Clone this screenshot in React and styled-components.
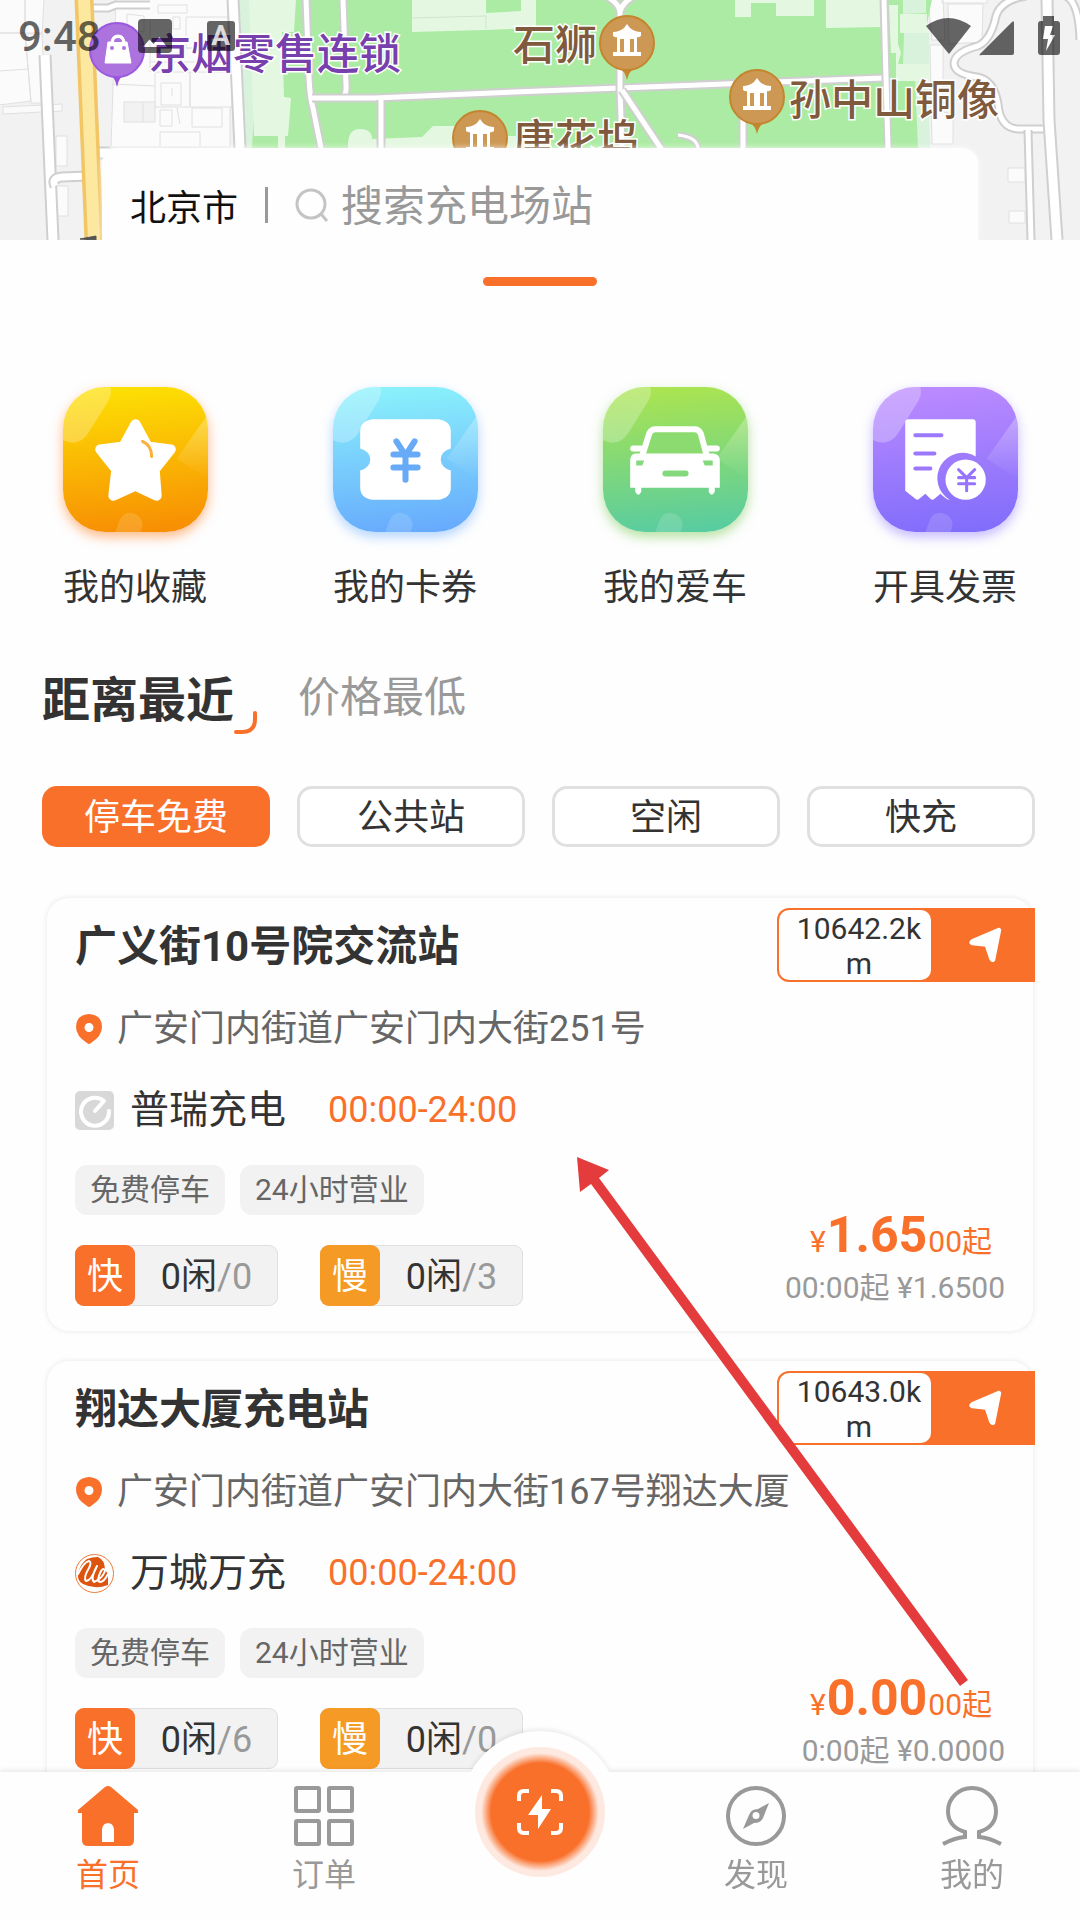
import React, { useState } from "react";
import styled, { createGlobalStyle } from "styled-components";

const services = [
    { id: "fav", label: "我的收藏", from: "#fde304", to: "#f78b03", glow: "rgba(255, 120, 20, 0.5)", Icon: StarIcon },
    { id: "coupon", label: "我的卡券", from: "#8bf4fb", to: "#66a8fd", glow: "rgba(90, 165, 255, 0.45)", Icon: CouponIcon },
    { id: "car", label: "我的爱车", from: "#aee54d", to: "#55cba4", glow: "rgba(110, 200, 70, 0.5)", Icon: CarIcon },
    { id: "invoice", label: "开具发票", from: "#bd8bff", to: "#7f6cfb", glow: "rgba(130, 105, 255, 0.45)", Icon: InvoiceIcon },
];

const filters = ["停车免费", "公共站", "空闲", "快充"];

const stations = [
    {
        name: "广义街10号院交流站",
        distance: "10642.2km",
        address: "广安门内街道广安门内大街251号",
        provider: "普瑞充电",
        Logo: PuruiLogo,
        hours: "00:00-24:00",
        tags: ["免费停车", "24小时营业"],
        fast: "0",
        slow: "3",
        price: "1.65",
        period: "00:00起 ¥1.6500",
    },
    {
        name: "翔达大厦充电站",
        distance: "10643.0km",
        address: "广安门内街道广安门内大街167号翔达大厦",
        provider: "万城万充",
        Logo: WanchengLogo,
        hours: "00:00-24:00",
        tags: ["免费停车", "24小时营业"],
        fast: "6",
        slow: "0",
        price: "0.00",
        period: "0:00起 ¥0.0000",
    },
];

export default function App() {
    const [sort, setSort] = useState("near");
    const [filter, setFilter] = useState(filters[0]);

    return (
        <Page>
            <GlobalStyle />
            <Content>
                <Header>
                    <CityMap />
                    <StatusBar />
                    <SearchBar>
                        <CityButton type="button">北京市</CityButton>
                        <Divider />
                        <SearchLabel>
                            <SearchIcon />
                            <SearchInput type="search" aria-label="搜索充电场站" placeholder="搜索充电场站" />
                        </SearchLabel>
                    </SearchBar>
                </Header>
                <Handle />
                <Services>
                    {services.map(({ id, label, from, to, glow, Icon }) => (
                        <ServiceLink href="#" key={id}>
                            <Tile $from={from} $to={to} $glow={glow}>
                                <Icon />
                            </Tile>
                            {label}
                        </ServiceLink>
                    ))}
                </Services>
                <SortRow>
                    <SortButton type="button" $active={sort === "near"} onClick={() => setSort("near")}>
                        距离最近
                        {sort === "near" && <SortMark />}
                    </SortButton>
                    <SortButton type="button" $active={sort === "cheap"} onClick={() => setSort("cheap")}>
                        价格最低
                        {sort === "cheap" && <SortMark />}
                    </SortButton>
                </SortRow>
                <Filters>
                    {filters.map((f) => (
                        <FilterButton type="button" key={f} $active={f === filter} onClick={() => setFilter(f)}>
                            {f}
                        </FilterButton>
                    ))}
                </Filters>
                <StationList>
                    {stations.map((s) => (
                        <Station key={s.name} station={s} />
                    ))}
                </StationList>
            </Content>
            <TabBar>
                <Bump />
                <Tab href="#" $active>
                    <HomeIcon />
                    首页
                </Tab>
                <Tab href="#">
                    <OrdersIcon />
                    订单
                </Tab>
                <ScanSlot>
                    <ScanButton type="button" aria-label="扫码充电">
                        <ScanIcon />
                    </ScanButton>
                </ScanSlot>
                <Tab href="#">
                    <CompassIcon />
                    发现
                </Tab>
                <Tab href="#">
                    <PersonIcon />
                    我的
                </Tab>
            </TabBar>
            <Pointer viewBox="0 0 1080 1920" aria-hidden="true">
                <path d="M577 1157L609 1170L599 1178L968 1680L960 1686L591 1184L580 1192z" fill="#e43c3c" />
            </Pointer>
        </Page>
    );
}

function Station({ station }) {
    const { Logo } = station;
    return (
        <Card>
            <CardHead>
                <StationName>{station.name}</StationName>
                <NavButton type="button">
                    <Distance>{station.distance}</Distance>
                    <NavIcon viewBox="0 0 34 36">
                        <path d="M31 3L25 33Q23 35 21.500 32L17 18.500L3 17Q0 15.500 3 13.500L30 2z" fill="#fff" stroke="#fff" strokeWidth="2.500" strokeLinejoin="round" />
                    </NavIcon>
                </NavButton>
            </CardHead>
            <Address>
                <PinIcon />
                {station.address}
            </Address>
            <Provider>
                <Logo />
                {station.provider}
                <Hours>{station.hours}</Hours>
            </Provider>
            <CardFoot>
                <div>
                    <Tags>
                        {station.tags.map((t) => (
                            <Tag key={t}>{t}</Tag>
                        ))}
                    </Tags>
                    <Slots>
                        <Slot>
                            <SlotKind $color="#f9702b">快</SlotKind>
                            <SlotCount>
                                0闲<Muted>/{station.fast}</Muted>
                            </SlotCount>
                        </Slot>
                        <Slot>
                            <SlotKind $color="#f59a25">慢</SlotKind>
                            <SlotCount>
                                0闲<Muted>/{station.slow}</Muted>
                            </SlotCount>
                        </Slot>
                    </Slots>
                </div>
                <PriceBox>
                    <Price>
                        ¥<strong>{station.price}</strong>00起
                    </Price>
                    <Muted>{station.period}</Muted>
                </PriceBox>
            </CardFoot>
        </Card>
    );
}

function StatusBar() {
    return (
        <Status>
            <Clock>9:48</Clock>
            <svg width="34" height="34" viewBox="0 0 34 34">
                <path fillRule="evenodd" d="M4 0H30Q34 0 34 4V30Q34 34 30 34H4Q0 34 0 30V4Q0 0 4 0zM5 28H29L21.500 18L15.500 25L11.500 20.500z" fill="#000" opacity="0.6" />
            </svg>
            <InputBadge>A</InputBadge>
            <StatusIcons width="134" height="40" viewBox="0 0 134 40">
                <path d="M0 10Q22-6 45 10L23 38z" />
                <path d="M54 38L86 6Q88 4 88 7V37Q88 39 86 39H56Q52 40 54 38z" />
                <path fillRule="evenodd" d="M117 0H128V5H131Q134 5 134 8V36Q134 39 131 39H115Q112 39 112 36V8Q112 5 115 5H117zM119 10L117 23H122L120 35L129 19H124L127 10z" />
            </StatusIcons>
        </Status>
    );
}

function Road({ d, width = 9 }) {
    return (
        <>
            <path d={d} fill="none" stroke="#cfcfcf" strokeWidth={width} />
            <path d={d} fill="none" stroke="#fff" strokeWidth={width - 4} />
        </>
    );
}

function Landmark({ x, y }) {
    return (
        <g transform={`translate(${x} ${y})`}>
            <path d="M-8 25Q-2 28 0 37Q2 28 8 25z" fill="#c4852f" />
            <circle r="27" fill="#cc9853" stroke="#c4852f" strokeWidth="2" />
            <path fillRule="evenodd" d="M0-19L3-15Q8-11 14-11V-7Q11-5 10-6V9H14V13H-14V9H-10V-6Q-11-5-14-7V-11Q-8-11-3-15zM-7-4V9H-3V-4zM3-4V9H7V-4z" fill="#fff" />
        </g>
    );
}

function CityMap() {
    return (
        <MapSvg viewBox="0 0 1080 240" preserveAspectRatio="xMidYMin slice" aria-hidden="true">
            <rect width="1080" height="240" fill="#f2f2f2" />
            <g fill="#fbfbfb" stroke="#e0e0e0">
                <path d="M-1-1H25V33H-1zM25-1H44L42 34H25zM-1 33H25L31 101L-1 105zM25 33H42L45 103H31z" />
                <path d="M-1 71L29 69" />
                <path d="M56 136H67V166H56zM55 186H68V216H55z" />
                <path d="M116-2H230V147H111z" />
                <path d="M158 5H187V13H158zM127 14L144 16V32L127 28zM173 17H180V29H173zM186 17H228V48H186z" />
                <path d="M155 72H190V107H155zM161 83H181V105H161zM172 88V96M190 72H232V107H190zM192 108H222V127H192zM160 110H172V126H160zM160 132H200V147H160z" />
                <path d="M124 102H155V122H124zM143 103V122M112 84L155 86M177 108L180 124M150 48H229M150 62H229M150 20V72" fill="#f2f2f2" />
                <path d="M928-1H943L945 40H932zM942-1H987V3H942zM948 4H983L982 42L949 44zM930 45H943V112L953 114V144H932z" />
                <path d="M1008 168H1025V182H1008zM1009 211H1025V223H1009z" />
            </g>
            <path d="M238-1H932L920 60L930 148H243z" fill="#acebA3" />
            <path d="M238-1H254L257 60L252 148H243z" fill="#d9f2dc" />
            <path d="M249-1H296L294 32H282L284 97L291 98L288 136H254z" fill="#e4f8e1" />
            <path d="M278 136H285V148H278zM412-1H536V28L485 30L412 32z" fill="#e4f8e1" />
            <path d="M486-1H521V11L486 13z" fill="#acebA3" />
            <path d="M412 18L486 16V29" fill="none" stroke="#cfe5cc" />
            <path d="M348 148Q347 129 360 129Q372 129 372 139L422 137L433 126H455V148zM505 136H516V148H505z" fill="#e4f8e1" />
            <path d="M735-1H814V16H776V3H751V17H735zM826-1H881V27L826 28z" fill="#e4f8e1" />
            <path d="M903-1H926V13L903 14zM904 33H929V64L903 65zM915 80L928 80L930 148H918z" fill="#d9f2dc" />
            <path d="M889 5H898V44L901 53L898 64H929V81H896V53H891zM900 14H927V33H900z" fill="#e4f8e1" />
            <path d="M3 107L62 104V111L3 114z" fill="#fafafa" stroke="#e0e0e0" />
            <Road d="M45 55L53 240" width={13} />
            <Road d="M88 176L62 177Q51 178 55 186" width={11} />
            <Road d="M90 8H108L116 5H150" />
            <Road d="M97 153H110" width={13} />
            <path d="M84-1L94 240" stroke="#f2c565" strokeWidth="19" />
            <path d="M84-1L94 240" stroke="#fde8a0" strokeWidth="12" />
            <Road d="M233-1L240 148" width={13} />
            <Road d="M306-1L309 78Q310 98 313 108L321 148" />
            <Road d="M343-1L346 85Q347 97 340 97" />
            <Road d="M312 98H375L540 91L620 88L884 78" />
            <Road d="M381 100V148" />
            <Road d="M606-4Q619 3 620 12L620 88L622 148M620 12Q622 3 634-4" />
            <Road d="M622 90L662 150" />
            <Road d="M678 135Q697 137 698 148" width={7} />
            <Road d="M743 90V148" />
            <Road d="M884-1L886 78L888 148" />
            <Road d="M1026-4Q1001 0 996 16Q991 40 978 46Q955 52 954 63Q954 74 977 77Q994 80 998 104Q1000 128 1018 129H1050" />
            <Road d="M1028 130L1031 240" />
            <Road d="M1066-4Q1079 3 1080 40" />
            <Road d="M1047-1L1049 120L1057 240" width={13} />
            <path d="M80 239L96 236V240z" fill="#555" stroke="#555" />
            <path d="M109 74Q115 77 117 87Q119 77 125 74z" fill="#9852d8" />
            <circle cx="117" cy="50" r="27" fill="#ac73de" stroke="#9b58df" strokeWidth="2" />
            <path d="M108 42H127L131 63H105zM111 44Q111 35 118 35Q125 35 125 44" fill="#fff" stroke="#fff" />
            <path d="M114 42Q114 38 118 38Q122 38 122 42z" fill="#ac73de" />
            <circle cx="112" cy="48" r="2" fill="#ac73de" />
            <circle cx="124" cy="48" r="2" fill="#ac73de" />
            <MapText x="149" y="69" $color="#7740ac">京烟零售连锁</MapText>
            <MapText x="513" y="60" $color="#805a3d">石狮</MapText>
            <Landmark x="627" y="43" />
            <MapText x="789" y="115" $color="#805a3d">孙中山铜像</MapText>
            <Landmark x="757" y="97" />
            <MapText x="513" y="155" $color="#805a3d">唐花坞</MapText>
            <Landmark x="480" y="138" />
        </MapSvg>
    );
}

function SearchIcon() {
    return (
        <svg width="34" height="36" viewBox="0 0 34 36" fill="none" stroke="#c4c4c4" strokeWidth="3">
            <circle cx="16" cy="17" r="14" />
            <path d="M26 27L32 34" />
        </svg>
    );
}

function SortMark() {
    return (
        <SortMarkSvg viewBox="0 0 23 23">
            <path d="M2 21H8Q21 21 21 8V2" fill="none" stroke="#f9702b" strokeWidth="4" strokeLinecap="round" />
        </SortMarkSvg>
    );
}

// light shapes shared by all four tiles
function TileShine() {
    return (
        <>
            <defs>
                <linearGradient id="shine" x1="0" y1="0" x2="0" y2="1">
                    <stop offset="0" stopColor="#fff" stopOpacity="0.3" />
                    <stop offset="1" stopColor="#fff" stopOpacity="0" />
                </linearGradient>
            </defs>
            <path d="M0 0H47Q49 6 45 14L25 46Q16 60 0 53z" fill="#fff" opacity="0.26" />
            <path d="M144 27L113 71L144 92z" fill="url(#shine)" />
            <path d="M52 144L56 133Q59 125 67 125Q79 127 79 138L77 144z" fill="#fff" opacity="0.14" />
        </>
    );
}

function StarIcon() {
    return (
        <svg viewBox="0 0 144 144">
            <TileShine />
            <path d="M72 37L84 59L107 62L91 82L93 108L72 98L50 108L53 82L37 62L60 59z" fill="#fff" stroke="#fff" strokeWidth="10" strokeLinejoin="round" />
            <path d="M79 54Q88 58 88 69" fill="none" stroke="#fbb03b" strokeWidth="3" strokeLinecap="round" />
        </svg>
    );
}

function CouponIcon() {
    return (
        <svg viewBox="0 0 144 144">
            <TileShine />
            <path d="M39 32H105Q117 34 117 44V61Q107 64 107 72Q107 80 117 83V100Q117 110 105 112H39Q27 110 27 100V83Q37 80 37 72Q37 64 27 61V44Q27 34 39 32z" fill="#fff" />
            <path d="M63 54L72 68L81 54M60 67H84M60 80H84M72 68V92" fill="none" stroke="#67abf8" strokeWidth="6" strokeLinecap="round" />
        </svg>
    );
}

function CarIcon() {
    return (
        <svg viewBox="0 0 144 144">
            <TileShine />
            <path d="M39 68L46 46Q48 42 52 42H91Q95 42 97 46L103 68" fill="#8cdb70" stroke="#fff" strokeWidth="6" />
            <path d="M30 61H38M104 61H113" stroke="#fff" strokeWidth="6" strokeLinecap="round" />
            <path d="M32 66H110Q116 67 116 73V100H111V104Q108 110 105 104V100H38V104Q35 110 32 104V100H27V73Q27 67 32 66z" fill="#fff" />
            <path d="M33 73H41L39 78H33zM99 73H109V78H101z" fill="#84d97c" />
            <rect x="59" y="83" width="26" height="6" rx="3" fill="#84d97c" />
        </svg>
    );
}

function InvoiceIcon() {
    return (
        <svg viewBox="0 0 144 144">
            <TileShine />
            <path d="M35 32H99Q102 32 102 35V69A25 25 0 0 0 76 112Q73 112 67 106L61 111Q59 113 57 111L52 106L46 111Q44 113 42 111L32 103V35Q32 32 35 32z" fill="#fff" />
            <circle cx="92" cy="92" r="20" fill="#fff" />
            <path d="M42 48H68M42 66H61M42 81H57" stroke="#9c79fc" strokeWidth="4" strokeLinecap="round" />
            <path d="M85 82L93 90L101 82M85 90H101M85 96H101M93 90V103" fill="none" stroke="#9674fc" strokeWidth="3" strokeLinecap="round" />
        </svg>
    );
}

function PinIcon() {
    return (
        <svg width="28" height="30" viewBox="0 0 28 30">
            <path fillRule="evenodd" d="M14 0Q27 1 27 13Q27 22 16 29Q14 31 12 29Q1 22 1 13Q1 1 14 0zM14 9A4.500 4.500 0 1 0 14 18A4.500 4.500 0 1 0 14 9z" fill="#f9702b" />
        </svg>
    );
}

function PuruiLogo() {
    return (
        <svg width="39" height="39" viewBox="0 0 39 39">
            <rect width="39" height="39" rx="5" fill="#d8d8d8" />
            <path d="M20 20L29 10A14 14 0 1 0 34 20" fill="none" stroke="#fff" strokeWidth="4" strokeLinecap="round" strokeLinejoin="round" />
        </svg>
    );
}

function WanchengLogo() {
    return (
        <svg width="39" height="39" viewBox="0 0 39 39">
            <circle cx="19.500" cy="19.500" r="19" fill="#fff" stroke="#ee7a3a" />
            <path d="M12 5Q17 3 23 3Q30 6 30 16L33 20V31Q20 36 8 30Q2 27 3 19Q6 9 12 5z" fill="#dd5410" />
            <path d="M3 20Q9 8 14 7Q17 8 14 14Q8 24 11 27Q16 27 22 12Q15 25 19 28Q27 25 30 17Q29 13 26 17Q21 27 25 28Q29 28 33 20" fill="none" stroke="#fff" strokeWidth="2" strokeLinecap="round" strokeLinejoin="round" />
        </svg>
    );
}

function HomeIcon() {
    return (
        <svg width="60" height="60" viewBox="0 0 60 60">
            <path fillRule="evenodd" d="M27 1Q30-1 33 1L60 24V27H56V54Q56 60 50 60H10Q4 60 4 54V27H0V24zM24 56H36V43Q35 37 30 37Q25 37 24 43z" fill="currentColor" />
        </svg>
    );
}

function OrdersIcon() {
    return (
        <svg width="60" height="60" viewBox="0 0 60 60" fill="none" stroke="currentColor" strokeWidth="4">
            <rect x="2" y="2" width="23" height="23" rx="1" />
            <rect x="35" y="2" width="23" height="23" rx="1" />
            <rect x="2" y="35" width="23" height="23" rx="1" />
            <rect x="35" y="35" width="23" height="23" rx="1" />
        </svg>
    );
}

function CompassIcon() {
    return (
        <svg width="60" height="60" viewBox="0 0 60 60">
            <circle cx="30" cy="30" r="28" fill="none" stroke="currentColor" strokeWidth="4" />
            <path fillRule="evenodd" d="M43 17L37 32Q35 37 28 37L17 43L23 29Q25 23 32 23zM30 26A3.500 3.500 0 1 0 30 33A3.500 3.500 0 1 0 30 26z" fill="currentColor" />
        </svg>
    );
}

function PersonIcon() {
    return (
        <svg width="60" height="60" viewBox="0 0 60 60" fill="none" stroke="currentColor" strokeWidth="4">
            <path d="M1 58Q12 52 23 51V46Q6 41 6 25A24 23 0 0 1 54 25Q54 41 37 46V51Q48 52 59 58" />
        </svg>
    );
}

function ScanIcon() {
    return (
        <svg width="48" height="48" viewBox="0 0 48 48">
            <path d="M13 3H8Q3 3 3 8V13M35 3H40Q45 3 45 8V13M13 45H8Q3 45 3 40V35M35 45H40Q45 45 45 40V35" fill="none" stroke="#fff" strokeWidth="4" />
            <path d="M26 7L12 27H22V41L35 21H26z" fill="#fff" />
        </svg>
    );
}

const GlobalStyle = createGlobalStyle`
    body {
        margin: 0;
        background: #fefefe;
        color: #333;
        font-family: Roboto, "Noto Sans CJK SC", sans-serif;
    }

    * {
        box-sizing: border-box;
    }

    button,
    input {
        font: inherit;
        color: inherit;
        padding: 0;
        border: none;
        background: none;
    }

    svg {
        flex-shrink: 0;
    }
`;

const Page = styled.div`
    position: relative;
    display: flex;
    flex-direction: column;
    height: 100vh;
    overflow: hidden;
`;

const Content = styled.main`
    flex: 1;
    min-height: 0;
    overflow-y: auto;
    scrollbar-width: none;
`;

const Header = styled.header`
    position: relative;
    height: 240px;
    display: flex;
    flex-direction: column;
    justify-content: space-between;
    overflow: hidden;
`;

const MapSvg = styled.svg`
    position: absolute;
    inset: 0;
    width: 100%;
    height: 100%;
`;

const MapText = styled.text`
    font-size: 42px;
    font-weight: 500;
    fill: ${(p) => p.$color};
    stroke: #fff;
    stroke-width: 3px;
    paint-order: stroke;
`;

const Status = styled.div`
    position: relative;
    display: flex;
    align-items: center;
    height: 72px;
    padding: 0 20px 0 18px;
`;

const Clock = styled.span`
    font-size: 42px;
    font-weight: 500;
    line-height: 48px;
    padding-top: 2px;
    color: rgba(0, 0, 0, 0.6);
    margin-right: 37px;
`;

const InputBadge = styled.span`
    width: 28px;
    height: 30px;
    margin-left: 35px;
    border-radius: 3px;
    background: rgba(0, 0, 0, 0.6);
    color: rgba(255, 255, 255, 0.8);
    font-size: 28px;
    font-weight: 700;
    line-height: 30px;
    text-align: center;
`;

const StatusIcons = styled.svg`
    margin-left: auto;
    fill: rgba(0, 0, 0, 0.6);
`;

const SearchBar = styled.div`
    position: relative;
    display: flex;
    align-items: center;
    height: 92px;
    margin: 0 102px;
    padding: 22px 28px 0;
    border-radius: 16px 16px 0 0;
    background: #fefefe;
    box-shadow: 0 0 6px rgba(255, 255, 255, 0.8);
`;

const CityButton = styled.button`
    color: #111;
    font-size: 36px;
    white-space: nowrap;
`;

const Divider = styled.span`
    width: 3px;
    height: 36px;
    margin: 0 27px;
    background: #999;
`;

const SearchLabel = styled.label`
    flex: 1;
    display: flex;
    align-items: center;
    gap: 12px;
`;

const SearchInput = styled.input`
    flex: 1;
    min-width: 0;
    padding-top: 3px;
    font-size: 42px;
    outline: none;

    &::placeholder {
        color: #999;
        opacity: 1;
    }
`;

const Handle = styled.div`
    width: 114px;
    height: 9px;
    margin: 37px auto 101px;
    border-radius: 5px;
    background: #f9702b;
`;

const Services = styled.nav`
    display: grid;
    grid-template-columns: repeat(4, 1fr);
`;

const ServiceLink = styled.a`
    display: flex;
    flex-direction: column;
    align-items: center;
    gap: 30px;
    color: #333;
    font-size: 36px;
    line-height: 52px;
    text-decoration: none;
`;

const Tile = styled.span`
    width: 145px;
    height: 145px;
    display: block;
    line-height: 0;
    border-radius: 42px;
    overflow: hidden;
    background: linear-gradient(175deg, ${(p) => p.$from}, ${(p) => p.$to});
    box-shadow: 0 5px 12px ${(p) => p.$glow};
`;

const SortRow = styled.div`
    display: flex;
    align-items: flex-start;
    gap: 64px;
    margin-top: 57px;
    padding: 0 42px;
`;

const SortButton = styled.button`
    position: relative;
    font-size: ${(p) => (p.$active ? "48px" : "42px")};
    font-weight: ${(p) => (p.$active ? 700 : 400)};
    line-height: ${(p) => (p.$active ? "60px" : "54px")};
    color: ${(p) => (p.$active ? "#333" : "#999")};
`;

const SortMarkSvg = styled.svg`
    position: absolute;
    left: 100%;
    bottom: -3px;
    width: 23px;
    height: 23px;
`;

const Filters = styled.div`
    display: grid;
    grid-template-columns: repeat(4, 1fr);
    gap: 27px;
    margin: 55px 45px 51px 42px;
`;

const FilterButton = styled.button`
    height: 61px;
    padding-top: 3px;
    border: 3px solid ${(p) => (p.$active ? "#f9702b" : "#e0e0e0")};
    border-radius: 15px;
    background: ${(p) => (p.$active ? "#f9702b" : "#fff")};
    color: ${(p) => (p.$active ? "#fff" : "#333")};
    font-size: 36px;
    line-height: 52px;
`;

const StationList = styled.section`
    display: flex;
    flex-direction: column;
    gap: 29px;
    padding: 0 47px 29px;
`;

const Card = styled.article`
    padding: 10px 28px 25px;
    border-radius: 22px;
    background: #fefefe;
    box-shadow: 0 0 5px 1px rgba(0, 0, 0, 0.07);

    & + & {
        margin-top: 1px;
    }
`;

const CardHead = styled.div`
    display: flex;
    align-items: center;
    justify-content: space-between;
    margin-right: -30px;
`;

const StationName = styled.h2`
    margin: 0;
    padding-top: 3px;
    font-size: 42px;
    font-weight: 700;
    line-height: 60px;
`;

const NavButton = styled.button`
    display: flex;
    align-items: center;
    width: 258px;
    height: 74px;
    padding: 2px 32px 2px 2px;
    border-radius: 12px 0 0 12px;
    background: #f9702b;
`;

const Distance = styled.span`
    width: 152px;
    height: 70px;
    padding: 1px 4px 0 12px;
    border-radius: 10px;
    background: #fefefe;
    font-size: 30px;
    line-height: 35px;
    word-break: break-all;
    text-align: center;
`;

const NavIcon = styled.svg`
    width: 34px;
    height: 36px;
    margin-left: auto;
`;

const Address = styled.p`
    display: flex;
    align-items: center;
    gap: 14px;
    margin: 22px 0 31px;
    color: #666;
    font-size: 36px;
    line-height: 50px;
`;

const Provider = styled.div`
    display: flex;
    align-items: center;
    gap: 16px;
    margin-bottom: 30px;
    font-size: 39px;
    line-height: 50px;
`;

const Hours = styled.span`
    margin-left: 26px;
    color: #f9702b;
    font-size: 36px;
`;

const CardFoot = styled.div`
    display: flex;
    align-items: flex-end;
    justify-content: space-between;
`;

const Tags = styled.div`
    display: flex;
    gap: 15px;
`;

const Tag = styled.span`
    padding: 0 15px;
    border-radius: 12px;
    background: #f2f2f2;
    color: #666;
    font-size: 30px;
    line-height: 50px;
`;

const Slots = styled.div`
    display: flex;
    gap: 42px;
    margin-top: 30px;
`;

const Slot = styled.div`
    display: flex;
    width: 203px;
    height: 61px;
    border-radius: 9px;
    background: #f2f2f2;
    box-shadow: inset 0 0 0 1px #e0e0e0;
    font-size: 36px;
    line-height: 64px;
    text-align: center;
`;

const SlotKind = styled.span`
    width: 60px;
    border-radius: 9px;
    background: ${(p) => p.$color};
    color: #fff;
`;

const SlotCount = styled.span`
    flex: 1;
`;

const Muted = styled.span`
    color: #999;
`;

const PriceBox = styled.div`
    display: flex;
    flex-direction: column;
    align-items: flex-end;
    font-size: 30px;
    line-height: 36px;
`;

const Price = styled.div`
    padding-right: 13px;
    color: #f9702b;
    line-height: 56px;

    strong {
        margin: 0 1px;
        font-size: 50px;
    }
`;

const TabBar = styled.nav`
    position: relative;
    display: grid;
    grid-template-columns: repeat(5, 1fr);
    height: 148px;
    background: #fefefe;
    filter: drop-shadow(0 -2px 2px rgba(0, 0, 0, 0.08));
`;

const Bump = styled.span`
    position: absolute;
    top: -41px;
    left: calc(50% - 79px);
    width: 158px;
    height: 158px;
    border-radius: 50%;
    background: #fefefe;
`;

const Tab = styled.a`
    position: relative;
    display: flex;
    flex-direction: column;
    align-items: center;
    gap: 9px;
    padding-top: 14px;
    color: ${(p) => (p.$active ? "#f9702b" : "#999")};
    font-size: 32px;
    line-height: 40px;
    text-decoration: none;
`;

const ScanSlot = styled.div`
    position: relative;
    display: flex;
    justify-content: center;
`;

const ScanButton = styled.button`
    position: absolute;
    top: -25px;
    display: flex;
    align-items: center;
    justify-content: center;
    width: 130px;
    height: 130px;
    border-radius: 50%;
    background: radial-gradient(circle, #f9702b 0 49px, #fee9e1 59px);
`;

const Pointer = styled.svg`
    position: absolute;
    inset: 0;
    width: 100%;
    height: 100%;
    pointer-events: none;
`;
